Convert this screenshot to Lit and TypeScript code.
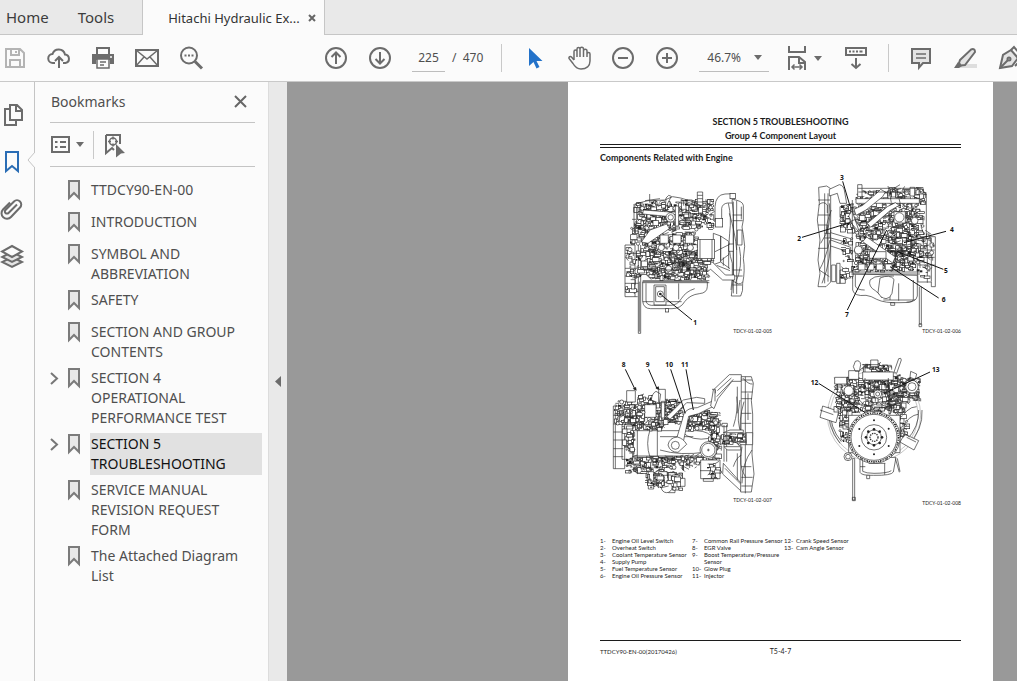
import { LitElement, html, svg, css } from "lit";
import { customElement, state } from "lit/decorators.js";

type Box = [x: number, y: number, w: number, h: number, count: number, seed: number];

/* Small machined parts (brackets, bolts, pipes) packed into a region. */
const parts = (boxes: Box[]) =>
  boxes.map(([x, y, w, h, count, seed]) => {
    let s = seed * 7919 + 13;
    const rnd = () => {
      s = (s * 16807) % 2147483647;
      return s / 2147483647;
    };
    return Array.from({ length: Math.round(count * 1.5) }, () => {
      const k = rnd();
      const pw = 4 + rnd() * 16;
      const ph = 3 + rnd() * 13;
      const px = Math.round(x + rnd() * Math.max(w - pw, 1));
      const py = Math.round(y + rnd() * Math.max(h - ph, 1));
      const iw = Math.round(pw);
      const ih = Math.round(ph);
      if (k < 0.36) return svg`<rect class="part" x=${px} y=${py} width=${iw} height=${ih} />`;
      if (k < 0.48) return svg`<rect class="dark" x=${px} y=${py} width=${Math.round(iw / 2)} height=${Math.round(ih / 2)} />`;
      if (k < 0.62) return svg`<circle class="part" cx=${px + 4} cy=${py + 4} r=${2 + Math.round(rnd() * 4)} />`;
      if (k < 0.82) return svg`<path class="ink" d=${`M${px} ${py}h${iw}v${ih}`} />`;
      return svg`<path class="ink" d=${`M${px} ${py}l${iw} ${Math.round((rnd() - 0.5) * 26)}`} />`;
    });
  });

const lead = (d: string) => svg`<path class="lead" d=${d} />`;
const num = (x: number, y: number, t: string) => svg`<text class="num" x=${x} y=${y}>${t}</text>`;

const figure5 = svg`
  <path class="ink" d="M75 225v155h38M75 225h30v155M75 250h40M75 295h40M75 318h40M75 340h40M75 365h40M95 205l20 20" />
  <path class="ink" d="M115 225V490h7V225M118 335v150" />
  <path class="part" d="M128 335V393q2 23 24 23h64q26 0 38-21q16-21 44-24q24-2 24-22v-14z" />
  <path class="ink" d="M138 340v50q0 14 16 16h58q20 0 32-20q14-22 40-30M128 395h32M200 395h45M236 340v48M162 345h36v60h-36zM167 350h26v45h-26z" />
  <circle class="part" cx="181" cy="372" r="9" /><circle class="dark" cx="181" cy="372" r="4" /><rect class="part" x="196" y="416" width="10" height="10" />
  <path class="part" d="M345 150v-40q2-36 30-38l28-1v28h-20q-16 2-18 16v35z" />
  <rect class="part" x="346" y="145" width="22" height="26" /><rect class="part" x="390" y="70" width="16" height="16" />
  <path class="part" d="M396 88q32 4 34 18v44q-8 20 0 44q8 34 0 72q6 34-2 74q2 24-6 38h-28l6-60V130z" />
  <path class="ink" d="M400 95v275M410 92v280M398 135h28M398 152h30M398 300h28M398 318h30M398 345h28M412 180h14v45h-14zM385 100q10 40 4 90q-6 50 8 90q2 40-4 80M388 130q18 60 22 110M396 330q22 20 32 6M424 110v38M418 230q12 60-12 110" />
  <path class="part" d="M340 190l22 8v78l-22 8zM362 198l24 16v40l-24 18zM386 222h14v22h-14z" />
  <path class="ink" d="M362 276l28 20M350 286l40 16M345 245l44-22M370 262v25M386 250v45" />
  <path class="part" d="M320 275l18 2l38 38h28v15h-36l-36-32l-12 8z" />
  ${parts([[102, 98, 60, 90, 60, 3], [150, 92, 90, 90, 95, 5], [235, 88, 110, 90, 105, 7], [90, 170, 80, 60, 35, 9], [130, 185, 165, 60, 110, 11], [108, 235, 70, 95, 45, 12], [140, 240, 195, 58, 150, 13], [145, 290, 185, 42, 100, 17], [76, 230, 36, 145, 20, 19]])}
  <rect class="part" x="293" y="208" width="50" height="58" /><path class="ink" d="M300 208v58M336 208v58M293 272h50" />
  <path class="part" d="M150 180l50-18 8 14-64 44-20-4zM130 120l80 6v14l-82-8zM198 84l8-8 8 3-18 35z" />
  <path class="part" d="M180 195h25v25h-25zM218 195h25v25h-25zM256 195h25v25h-25z" />
  <circle class="part" cx="184" cy="233" r="9" /><circle class="part" cx="228" cy="233" r="9" /><circle class="part" cx="271" cy="233" r="9" /><circle class="part" cx="206" cy="296" r="9" />
  <circle class="part" cx="212" cy="142" r="14" /><circle class="part" cx="212" cy="142" r="8" />
  <path class="part" d="M292 66h16v40h-16zM292 76h16M292 86h16M292 96h16M226 108h10v60h-10z" />
  <path class="ink" d="M104 102l40-10 50-2 24-10 24 4 40 12 26 14M149 72v26M135 92l45-6M102 102v80M110 112v60M96 148h12M242 88l46 18M128 332h200M128 338h200M130 300h195" />
  ${lead("M184 375L276 450")}${num(280, 464, "1")}`;

const figure6 = svg`
  <path class="part" d="M86 52l24-4 12 8v280l-14 14H84l6-40-6-40 6-60-8-60 6-50z" />
  <path class="ink" d="M104 70v270M114 70v265M84 90h36M84 135h36M84 165h28v70H84M124 120q-18 45-14 70M118 100q10 70-26 120M120 210q-14 60-32 90M122 180q4 90-26 160M88 300l30 20M86 105q14-14 26 0v24M104 190h16v14h-16" />
  <path class="part" d="M118 58l30-14q14 2 16 22l6 34h-20l-8-30-24 8z" />
  <path class="part" d="M150 110h22v32h-22zM122 188l60 18v14l-60-16zM122 210l60 22v16l-60-20zM125 285h12v50h-12zM140 280h10v60h-10zM150 300h16v40h-16z" />
  <path class="part" d="M188 312v48q4 20 40 16q16 2 32 12q24 12 70 10q50 2 52-20v-62z" />
  <path class="ink" d="M196 314v34q4 12 28 12M240 330q12-12 34-12h38M240 330q-6 20 16 32q14 10 20 22M300 320v70M326 340v52M370 330v58q-2 10-20 8M280 390h95M302 398h12v8h-12z" />
  <path class="part" d="M270 324q30-12 42 4l-6 42q-6 16-18 16q-16-2-24-18z" />
  <path class="part" d="M378 200h58v150h-12v-14h-40z" />
  <path class="ink" d="M412 200v138M424 205v130M384 240h50M384 262h50M384 285h50M388 350v112h6V350M387 462h8v8h-8z" />
  ${parts([[190, 60, 110, 60, 45, 23], [290, 52, 120, 70, 75, 27], [185, 110, 120, 70, 90, 29], [290, 115, 115, 80, 110, 31], [195, 170, 100, 80, 70, 37], [285, 180, 100, 90, 125, 41], [190, 240, 190, 66, 160, 43], [150, 100, 45, 90, 45, 47], [375, 180, 58, 150, 40, 48], [150, 200, 40, 130, 22, 49]])}
  <path class="part" d="M198 86h190v14H198zM203 44h13v36h-13zM360 52h14v26h-14z" />
  <path class="part" d="M192 118l26-12 44-38 10-10 14 8-8 14-50 40-30 16zM232 160l60-50 24-12 12 8-28 16-58 50zM186 122l20 58-8 6-22-48zM218 215l12-14 86 60-8 18zM180 155l14-6 18 24-6 12z" />
  <path class="part" d="M238 245h50v20h-50zM312 125h34v34h-34z" />
  <circle class="part" cx="328" cy="142" r="14" /><circle class="part" cx="374" cy="152" r="10" /><circle class="part" cx="205" cy="240" r="12" />
  <path class="part" d="M205 282h20v18h-20zM232 282h20v18h-20zM259 282h20v18h-20zM286 282h20v18h-20z" />
  <path class="ink" d="M203 55h190l16 18v130M294 48l10 50M320 56l12 50M187 90v215M184 306h206M184 312h206M205 66h150" />
  ${lead("M158 34L180 108")}${lead("M36 202L180 158")}${lead("M468 184L342 218")}${lead("M460 298L320 244")}${lead("M446 384L300 290")}${lead("M172 420L290 180")}
  ${num(150, 30, "3")}${num(22, 212, "2")}${num(480, 185, "4")}${num(462, 308, "5")}${num(455, 396, "6")}${num(165, 440, "7")}`;

const figure7 = svg`
  <path class="part" d="M40 168h34v188H40zM40 196h30M40 222h30M40 246h30M40 270h30M40 296h30M40 320h30M46 168v188M66 218h32v110H66zM75 260h10v28H75z" />
  <path class="part" d="M100 242h190q40 2 50 26l8 40-30 14H100z" />
  <path class="ink" d="M112 240v82M150 240q-14 40 0 82M172 242v76M180 260h100M180 300q60 18 140 6M245 245q30 30 84 20M102 318h240M102 326h240" />
  ${parts([[42, 150, 70, 75, 40, 53], [110, 135, 80, 95, 90, 57], [180, 145, 70, 80, 80, 59], [245, 180, 100, 65, 105, 61], [76, 320, 80, 50, 50, 67], [150, 318, 190, 30, 75, 71], [135, 365, 115, 45, 85, 73], [325, 185, 40, 145, 45, 79], [85, 215, 110, 28, 40, 80], [66, 225, 40, 95, 22, 83], [100, 345, 190, 20, 22, 85]])}
  <path class="part" d="M80 122h26v34H80zM176 118h20v40h-20zM134 164h34v38h-34zM184 154h10v50h-10zM154 150q2-20 14-26l14 8-4 28z" />
  <path class="part" d="M230 265l14-46 8-28q10-18 40-18l46-20 6 14-48 24-30 8-16 76zM200 200l50-50 40-8 24 4v14l-54-2-50 50z" />
  <path class="part" d="M204 285q4-22 28-24q18 4 28 22l-26 24q-24 0-30-22z" /><circle class="part" cx="226" cy="286" r="12" />
  <circle class="part" cx="325" cy="300" r="25" /><circle class="ink" cx="325" cy="300" r="20" /><path class="ink" d="M325 296v8M321 300h8" />
  <path class="part" d="M302 330h58v56h-58zM300 362h62M310 386h30v8h-30zM145 365h16v52h-16zM175 365l12 45h20l-6-45zM205 368h20v60h-20zM225 385h30v24h-30z" />
  <circle class="part" cx="180" cy="385" r="14" /><circle class="part" cx="200" cy="412" r="16" />
  ${parts([[140, 372, 110, 50, 30, 87]])}
  <path class="part" d="M340 120l48-46h36v20h-28l-42 52-12 30-10-8zM370 340l54 60v24l-56-52z" />
  <path class="ink" d="M352 122l42-38M350 140l50-52M375 355l50 50M345 120v34M336 118h10v12M372 225v110M380 225v110M366 230h16v-10h-16z" />
  <path class="part" d="M424 80h30l6 20-6 52 4 40v60l-2 60 6 60-8 54h-32z" />
  <path class="ink" d="M424 90h32M424 126h34M424 146h32M424 350h30M424 382h34M432 155q-18 60-8 100M428 84q18 20 30 18M444 130v80M420 150q-14 70 8 110M426 290q-12 60 10 90M456 300q-30 40-30 100M424 408h32M436 80v350M412 110v80M412 310v80M424 190h30M424 220h30M400 350q10-30 24-34M400 230q16-50 10-90" />
  <path class="part" d="M362 256h26v26h-26zM388 262h26v14h-26zM414 250h24v34h-24zM438 248h20v36h-20zM370 248h60v-8h-40zM372 290h50v10h-40z" />
  ${parts([[362, 250, 78, 34, 30, 89], [320, 340, 45, 50, 14, 97], [74, 165, 60, 55, 45, 98]])}
  ${lead("M76 58L106 120")}${lead("M146 58L172 118")}${lead("M212 58L256 190")}${lead("M258 58L280 180")}
  <path class="dark" d="M110 122l-12-6 10-5zM178 120l-12-6 10-5z" />
  ${num(65, 52, "8")}${num(137, 52, "9")}${num(196, 52, "10")}${num(243, 52, "11")}`;

const bolts = (cx: number, cy: number, r: number, n: number, size: number) =>
  Array.from({ length: n }, (_, i) => {
    const a = (i / n) * Math.PI * 2 + Math.PI / 2;
    return svg`<circle class="dark" cx=${Math.round(cx + Math.cos(a) * r)} cy=${Math.round(cy + Math.sin(a) * r)} r=${size} />`;
  });

const figure8 = svg`
  <circle class="faint" cx="252" cy="195" r="140" /><circle class="faint" cx="252" cy="195" r="132" />
  <path class="ink" d="M396 180q4 60-44 106M116 170q-6 60 34 110M122 180q-4 50 32 95M386 180q2 50-36 90M325 220q24-50 55-50M332 235q28-40 52-42" />
  <path class="part" d="M98 168l48 16-8 34-48-16zM344 252l42 20-14 28-42-24zM90 180l40 14M350 262l28 14" />
  <path class="part" d="M210 325v42q4 10 40 9q54 1 60-10l8-44z" /><path class="ink" d="M218 330v34q10 6 34 6q40 0 52-8M236 340h50M284 340v34M316 325l12 42 M322 325l8 40M210 350h16" />
  <path class="part" d="M188 325h6v125h-6zM187 442h9v10h-9zM230 376h9v10h-9z" />
  <circle class="part" cx="174" cy="320" r="12" /><circle class="ink" cx="174" cy="320" r="7" />
  ${parts([[132, 78, 80, 110, 115, 101], [205, 84, 110, 60, 105, 103], [290, 78, 60, 115, 85, 107], [330, 85, 62, 70, 65, 109], [205, 140, 130, 50, 50, 113], [145, 180, 45, 105, 38, 127], [318, 185, 45, 85, 20, 131], [215, 40, 90, 30, 40, 137]])}
  <path class="part" d="M196 34q14-6 16 10l-4 20h-12l-6-14zM326 26q8-4 8 4l-14 40-8-4zM242 30h22v20h-22zM218 66h92v24h-92zM176 62h30v26h-30zM134 82h36v20h-36z" />
  <path class="ink" d="M210 60q10-14 30-16h28l32 22M224 54h66M208 150q20 30 60 8q20 20 50 6M225 84v60M295 84v60M235 95h40v30h-40z" />
  <circle class="part" cx="366" cy="110" r="19" /><circle class="part" cx="366" cy="110" r="12" /><path class="part" d="M362 64l18 8-4 16-16-6z" />
  <circle class="part" cx="176" cy="122" r="14" /><circle class="part" cx="263" cy="132" r="12" /><circle class="ink" cx="263" cy="132" r="6" />
  <path class="part" d="M176 196h154v112H176z" />
  <circle class="part" cx="252" cy="262" r="78" /><circle class="ring" cx="252" cy="262" r="73" /><circle class="part" cx="252" cy="262" r="69" />
  <circle class="part" cx="252" cy="262" r="38" /><circle class="ink" cx="252" cy="262" r="22" /><circle class="ring" cx="252" cy="262" r="12" />
  ${bolts(252, 262, 51, 6, 3)}${bolts(252, 262, 24, 8, 4)}${bolts(252, 262, 75, 24, 2)}
  ${lead("M86 100L226 188")}${lead("M420 66L296 124")}
  ${num(62, 104, "12")}${num(426, 66, "13")}`;

const ic = (body: unknown, w = 24, h = 24) =>
  html`<svg class="icon" width=${w} height=${h} viewBox="0 0 ${w} ${h}" aria-hidden="true">${body}</svg>`;

const caret = html`<svg class="caret" width="8" height="5" viewBox="0 0 8 5" aria-hidden="true"><path d="M0 0h8L4 5z" /></svg>`;

const icons = {
  save: svg`<g class="pale"><path d="M3 3h14l4 4v14H3zM8 3v6h8V3M13 5v2M7 21v-7h10v7" /></g>`,
  upload: svg`<path d="M8 17H6a4.500 4.500 0 0 1-.5-9A6.500 6.500 0 0 1 18 8.500A4.300 4.300 0 0 1 18.500 17H16M12 22V11M8 15l4-4 4 4" />`,
  print: svg`<path class="solid" d="M5 1h14v7H5zM1 8h22v10h-4v-4H5v4H1z" /><path class="paper" d="M7 3h10v5H7z" /><path d="M6 13h12v9H6zM9 16h6M9 19h4" class="sheet" /><circle cx="20" cy="11" r="1" class="paper" />`,
  mail: svg`<path d="M1 4h22v16H1z" /><path class="thin" d="M1 4l11 9L23 4M1 20l8-9M23 20l-8-9" />`,
  find: svg`<circle cx="10" cy="9.500" r="8" /><path class="thick" d="M16 15.500l7 7" /><path class="dots" d="M5.500 9.500h2M9 9.500h2M12.500 9.500h2" />`,
  up: svg`<circle cx="12" cy="12" r="10" /><path d="M12 18V7M7.500 11L12 6.500l4.500 4.500" />`,
  down: svg`<circle cx="12" cy="12" r="10" /><path d="M12 6v11M7.500 13l4.500 4.500 4.500-4.500" />`,
  arrow: svg`<path class="blue" d="M6 2v18l4.500-4 3 6.500 3-1.500-3-6h6z" />`,
  hand: svg`<path class="hand" d="M7 14V5.500a1.500 1.500 0 0 1 3 0V11M10 11V3a1.500 1.500 0 0 1 3 0v8M13 11V3a1.500 1.500 0 0 1 3.500 0v8M16.500 11V5a1.500 1.500 0 0 1 3.500 0V11M20 8a1.500 1.500 0 0 1 3 0v7c0 5-3.500 8-9 8c-4 0-6-2-8-5.500L2 12.500a1.500 1.500 0 0 1 2.500-1.500L7 14" />`,
  minus: svg`<circle cx="12" cy="12" r="10" /><path d="M7 12h10" />`,
  plus: svg`<circle cx="12" cy="12" r="10" /><path d="M7 12h10M12 7v10" />`,
  fit: svg`<path d="M3 0v6h16V0M3 24V11h10l6 5v8M13 11v6h6" /><path class="thin" d="M6 21h10M8.500 18.500L6 21l2.500 2.500M13.500 18.500L16 21l-2.500 2.500" />`,
  scroll: svg`<path d="M2 2h20v7H2z" /><path class="dots" d="M5 5.500h2M8.500 5.500h2M12 5.500h2M15.500 5.500h3" /><path d="M12 12v10M7.500 18l4.500 4 4.500-4" />`,
  note: svg`<path class="fill" d="M3 3h18v14h-7l-4 4.500V17H3z" /><path d="M7 8h10M7 12h10" class="thin" />`,
  marker: svg`<path class="shade" d="M8 18h16v4H2z" /><path class="fill" d="M7 14L18 3.500q4-1.500 4 2.500L12 19l-4 .5-2-2.500z" /><path class="solid" d="M5 16l4 4-3 2H1z" />`,
  pen: svg`<path class="fill" d="M3 22l3-13 8-5 7 8-6 8z" /><path d="M14 4l3-3 7 8M3 22l8-8M18 20l3-3v4h4" /><circle cx="12" cy="13" r="1.500" />`,
  pages: svg`<path d="M10 2h7l5 5v10H10zM16 2v6h6M9 6H5v16h11v-4" />`,
  bookmark: svg`<path class="mark" d="M6 2h12v19l-6-5-6 5z" />`,
  clip: svg`<path d="M17 7.500l-8.500 8.500a2 2 0 0 1-3-3L14 4.500a4 4 0 0 1 6 6L11 20a5.300 5.300 0 0 1-8-7.500L10 5.500" />`,
  layers: svg`<path class="fill" d="M12 13l10 5-10 5-10-5z" /><path class="fill" d="M12 8l10 5-10 5-10-5z" /><path class="page" d="M12 2l10 5.500L12 13 2 7.500z" />`,
  options: svg`<path d="M2 4h17v15H2z" /><path class="dots" d="M5 9h2.500M5 14h2.500" /><path d="M10 9h6M10 14h6" />`,
  newMark: svg`<path d="M3 2h14v9M3 2v18l6-5 2 2" /><circle class="thin" cx="10" cy="8.500" r="3.500" /><path class="thin" d="M10 3.500v3M10 10.500v3M5 8.500h3M12 8.500h3" /><path class="solid" d="M13 11l9 9-4 .5-5 4z" />`,
};

const bookmarks = [
  { text: "TTDCY90-EN-00" },
  { text: "INTRODUCTION" },
  { text: "SYMBOL AND ABBREVIATION" },
  { text: "SAFETY" },
  { text: "SECTION AND GROUP CONTENTS" },
  { text: "SECTION 4 OPERATIONAL PERFORMANCE TEST", open: true },
  { text: "SECTION 5 TROUBLESHOOTING", open: true },
  { text: "SERVICE MANUAL REVISION REQUEST FORM" },
  { text: "The Attached Diagram List" },
];

const legend: [string, string][][] = [
  [["1-", "Engine Oil Level Switch"], ["2-", "Overheat Switch"], ["3-", "Coolant Temperature Sensor"], ["4-", "Supply Pump"], ["5-", "Fuel Temperature Sensor"], ["6-", "Engine Oil Pressure Sensor"]],
  [["7-", "Common Rail Pressure Sensor"], ["8-", "EGR Valve"], ["9-", "Boost Temperature/Pressure Sensor"], ["10-", "Glow Plug"], ["11-", "Injector"]],
  [["12-", "Crank Speed Sensor"], ["13-", "Cam Angle Sensor"]],
];

@customElement("app-root")
export class AppRoot extends LitElement {
  @state() private selected = 6;

  static styles = css`
    :host {
      display: flex;
      flex-direction: column;
      height: 100vh;
      overflow: hidden;
      background: #fbfbfb;
      color: #4f4f4f;
      font: 14px/20px "Noto Sans", "Open Sans", sans-serif;
    }
    * { box-sizing: border-box; }
    button, input, select {
      font: inherit;
      color: inherit;
      border: 0;
      padding: 0;
      margin: 0;
      background: none;
      border-radius: 0;
    }
    svg { display: block; flex: none; }
    .icon { fill: none; stroke: #6c6c6c; stroke-width: 2; overflow: visible; }
    .icon .thin { stroke-width: 1.5; }
    .icon .thick { stroke-width: 3; }
    .icon .dots { stroke-width: 2; }
    .icon .solid { fill: #6c6c6c; stroke: none; }
    .icon .paper { fill: #fbfbfb; stroke: none; }
    .icon .sheet { fill: #fbfbfb; stroke-width: 1.5; }
    .icon .page { fill: #fbfbfb; }
    .icon .fill { fill: #e4e4e4; }
    .icon .shade { fill: #dedede; stroke: none; }
    .icon .pale { stroke: #b4b4b4; }
    .icon .hand { stroke-width: 1.5; }
    .icon .blue { fill: #2372c9; stroke: none; }
    .caret { fill: #6c6c6c; }

    .tabs { display: flex; flex: none; height: 35px; background: #e9e9e9; border-bottom: 1px solid #c6c6c6; }
    .tab { padding: 0 28px 1px 1px; font-size: 15px; color: #3c3c3c; }
    .tab:first-child { padding-left: 6px; }
    .doc-tab {
      display: flex;
      align-items: center;
      gap: 8px;
      height: 35px;
      padding: 0 8px 0 25px;
      background: #fbfbfb;
      border: solid #c6c6c6;
      border-width: 0 1px;
      font-size: 13px;
      color: #333;
    }
    .doc-tab svg { stroke: #666; stroke-width: 2; }

    .toolbar { display: flex; flex: none; align-items: center; height: 47px; overflow: hidden; border-bottom: 1px solid #c9c9c9; font-size: 12px; }
    .group { display: flex; flex: none; align-items: center; gap: 14px; }
    .tool { display: flex; flex: none; align-items: center; justify-content: center; gap: 4px; min-width: 30px; height: 32px; }
    .nav { margin-left: 115px; }
    .page-no { width: 33px; height: 28px; margin-left: 17px; border-bottom: 1px solid #bdbdbd; text-align: center; }
    .total { margin: 0 18px 0 7px; white-space: pre; }
    .rule { flex: none; width: 1px; height: 28px; background: #c9c9c9; }
    .view { margin-left: 18px; }
    .zoom { display: grid; flex: none; align-items: center; width: 70px; height: 28px; margin: 0 17px; border-bottom: 1px solid #bdbdbd; }
    .zoom > * { grid-area: 1 / 1; }
    .zoom select { width: 100%; padding-left: 8px; appearance: none; }
    .zoom .caret { justify-self: end; margin-right: 7px; pointer-events: none; }
    .fit { margin-right: 19px; }
    .scroll { margin-right: 17px; }
    .comments { margin-left: 17px; }

    .body { display: flex; flex: 1; min-height: 0; }
    .rail { position: relative; display: flex; flex: none; flex-direction: column; width: 35px; padding-top: 9px; border-right: 1px solid #c4c4c4; }
    .rail button { display: flex; align-items: center; height: 47px; }
    .rail .on .icon { stroke: #2a6db5; }
    .notch { position: absolute; right: -1px; top: 69px; fill: #fbfbfb; stroke: #c4c4c4; }
    .panel { flex: none; width: 234px; padding: 0 6px 0 15px; border-right: 1px solid #dcdcdc; }
    .head, .options { display: flex; align-items: center; margin-right: 7px; border-bottom: 1px solid #c4c4c4; }
    .head { justify-content: space-between; height: 41px; padding: 0 8px 1px 1px; }
    .head h2 { margin: 0; font: inherit; }
    .head svg { stroke: #666; stroke-width: 2; }
    .options { height: 44px; }
    .options button { display: flex; align-items: center; gap: 6px; }
    .options .rule { margin: 0 9px; }
    .list { list-style: none; margin: 12px 0 0; padding: 0; }
    .list li { display: flex; align-items: flex-start; min-height: 32px; padding-bottom: 4px; }
    .twist { flex: none; width: 18px; height: 22px; }
    .twist svg { fill: none; stroke: #777; stroke-width: 2; }
    .list .icon { margin-right: 10px; stroke: #7b7b7b; fill: #e8e8e8; }
    .name { flex: 1; padding: 1px 12px 1px 1px; color: inherit; text-decoration: none; }
    .name.sel { background: #e1e1e1; color: #111; }
    .collapse { display: flex; flex: none; align-items: center; justify-content: center; width: 18px; background: #e9e9e9; }
    .collapse svg { fill: #6c6c6c; }

    .canvas { display: flex; flex: 1; justify-content: flex-end; min-width: 0; padding-right: 24px; overflow: hidden; background: #999; }
    .sheet-page {
      display: flex;
      flex: none;
      flex-direction: column;
      width: 425px;
      padding: 34px 32px 25px;
      background: #fff;
      color: #1c1c1c;
      font-family: Lato, "Open Sans", sans-serif;
      font-size: 6px;
      line-height: 7px;
    }
    .title, .sub, .part-title { margin: 0; font-size: 9px; }
    .title { line-height: 12px; text-align: center; }
    .sub { line-height: 16px; text-align: center; }
    .part-title { padding-top: 4px; border-top: 4px double #1c1c1c; line-height: 11px; }
    .figures { display: grid; grid-template-columns: 172px 172px; justify-content: space-between; align-items: start; row-gap: 14px; margin-top: 7px; }
    .figures figure { display: grid; margin: 0; }
    .figures figure > * { grid-area: 1 / 1; }
    .figures figcaption { align-self: end; justify-self: end; font-size: 5px; line-height: 9px; }
    .ink, .part, .faint, .ring, .lead { fill: none; stroke: #2c2c2c; stroke-width: 2; }
    .part { fill: #fff; }
    .dark { fill: #222; }
    .faint { stroke: #aaa; }
    .ring { stroke-width: 4; stroke-dasharray: 4 3; }
    .lead { stroke: #111; stroke-width: 3; }
    .num { font: bold 20px "Noto Sans", sans-serif; fill: #111; }
    .legend { display: grid; grid-template-columns: 92px 92px 92px; margin-top: 29px; }
    .legend dl { display: grid; grid-template-columns: 12px 80px; align-content: start; margin: 0; }
    .legend dd { margin: 0; }
    .foot { display: grid; grid-template-columns: 1fr auto 1fr; margin-top: auto; padding-top: 6px; border-top: 1px solid #1c1c1c; line-height: 9px; }
    .folio { font-size: 7px; }
  `;

  private tool(name: keyof typeof icons, label: string) {
    return html`<button class="tool" aria-label=${label}>${ic(icons[name])}</button>`;
  }

  private figure(code: string, drawing: unknown, height: number, left = 0) {
    return html`<figure>
      <svg width="172" height=${height} viewBox="${left} 0 516 ${height * 3}" role="img" aria-label=${code}>${drawing}</svg>
      <figcaption>${code}</figcaption>
    </figure>`;
  }

  render() {
    return html`
      <nav class="tabs">
        <button class="tab">Home</button>
        <button class="tab">Tools</button>
        <div class="doc-tab">
          <span>Hitachi Hydraulic Ex...</span>
          <button aria-label="Close tab"><svg width="8" height="8" viewBox="0 0 8 8"><path d="M1 1l6 6M7 1L1 7" /></svg></button>
        </div>
      </nav>
      <div class="toolbar">
        <div class="group">
          ${this.tool("save", "Save")}${this.tool("upload", "Upload")}${this.tool("print", "Print")}${this.tool("mail", "Send by mail")}${this.tool("find", "Find")}
        </div>
        <div class="group nav">${this.tool("up", "Previous page")}${this.tool("down", "Next page")}</div>
        <input class="page-no" aria-label="Page number" .value=${"225"} />
        <span class="total">/  470</span>
        <span class="rule"></span>
        <div class="group view">
          ${this.tool("arrow", "Select")}${this.tool("hand", "Pan")}${this.tool("minus", "Zoom out")}${this.tool("plus", "Zoom in")}
        </div>
        <div class="zoom">
          <select aria-label="Zoom level"><option>46.7%</option><option>100%</option></select>
          ${caret}
        </div>
        <button class="tool fit" aria-label="Fit width">${ic(icons.fit)}${caret}</button>
        <button class="tool scroll" aria-label="Scrolling">${ic(icons.scroll)}</button>
        <span class="rule"></span>
        <div class="group comments">${this.tool("note", "Comment")}${this.tool("marker", "Highlight")}${this.tool("pen", "Sign")}</div>
      </div>
      <div class="body">
        <nav class="rail">
          <button aria-label="Page thumbnails">${ic(icons.pages)}</button>
          <button class="on" aria-label="Bookmarks">${ic(icons.bookmark)}</button>
          <button aria-label="Attachments">${ic(icons.clip)}</button>
          <button aria-label="Layers">${ic(icons.layers)}</button>
          <svg class="notch" width="8" height="18" viewBox="0 0 8 18"><path d="M8 1L1 9l7 8" /></svg>
        </nav>
        <aside class="panel">
          <div class="head">
            <h2>Bookmarks</h2>
            <button aria-label="Close panel"><svg width="13" height="13" viewBox="0 0 13 13"><path d="M1 1l11 11M12 1L1 12" /></svg></button>
          </div>
          <div class="options">
            <button aria-label="Bookmark options">${ic(icons.options, 20)}${caret}</button>
            <span class="rule"></span>
            <button aria-label="New bookmark">${ic(icons.newMark)}</button>
          </div>
          <ul class="list">
            ${bookmarks.map(
              (b, i) => html`<li>
                <span class="twist">${b.open ? html`<svg width="9" height="22" viewBox="0 0 9 22"><path d="M1 6l6 5.500L1 17" /></svg>` : null}</span>
                <svg class="icon" width="12" height="22" viewBox="0 0 12 22"><path d="M1 2h10v17l-5-5-5 5z" /></svg>
                <a href="#" class="name ${i === this.selected ? "sel" : ""}" @click=${(e: Event) => { e.preventDefault(); this.selected = i; }}>${b.text}</a>
              </li>`
            )}
          </ul>
        </aside>
        <button class="collapse" aria-label="Collapse panel"><svg width="6" height="11" viewBox="0 0 6 11"><path d="M6 0v11L0 5.500z" /></svg></button>
        <main class="canvas">
          <article class="sheet-page">
            <h1 class="title">SECTION 5 TROUBLESHOOTING</h1>
            <h2 class="sub">Group 4 Component Layout</h2>
            <h3 class="part-title">Components Related with Engine</h3>
            <div class="figures">
              ${this.figure("TDCY-01-02-005", figure5, 166)}
              ${this.figure("TDCY-01-02-006", figure6, 166, -3)}
              ${this.figure("TDCY-01-02-007", figure7, 155)}
              ${this.figure("TDCY-01-02-008", figure8, 158, -3)}
            </div>
            <div class="legend">
              ${legend.map((col) => html`<dl>${col.map(([n, t]) => html`<dt>${n}</dt><dd>${t}</dd>`)}</dl>`)}
            </div>
            <footer class="foot"><span>TTDCY90-EN-00(20170426)</span><span class="folio">T5-4-7</span></footer>
          </article>
        </main>
      </div>
    `;
  }
}
